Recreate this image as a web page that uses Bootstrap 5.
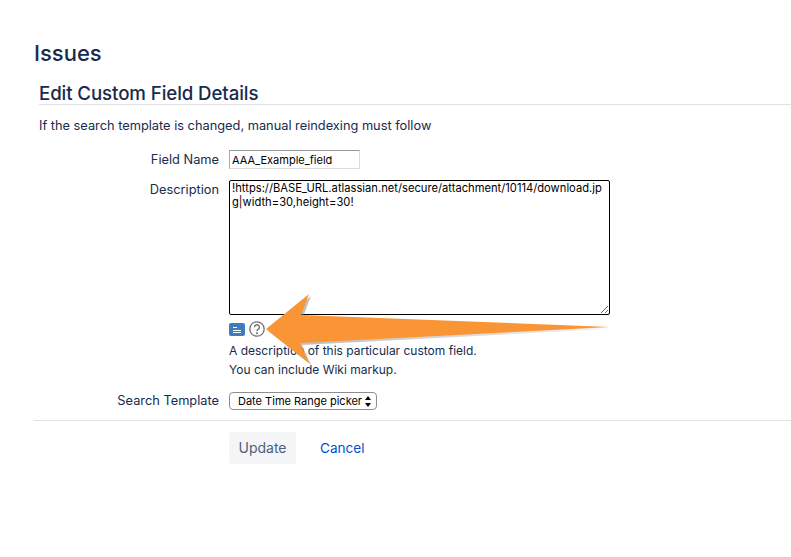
<!DOCTYPE html>
<html lang="en"><head><meta charset="utf-8"><title>Edit Custom Field Details</title>
<link href="https://cdn.jsdelivr.net/npm/bootstrap@5.3.0/dist/css/bootstrap.min.css" rel="stylesheet">
<style>
html,body{height:100%;overflow:hidden}
body{background:#fff;color:#172b4d;font-family:Inter,"Liberation Sans",sans-serif;font-size:12.8px;position:relative}
.page-wrap{padding:39px 0 0 34px}
.page-title{font-size:22px;font-weight:500;line-height:28px;margin:0 0 15px;color:#172b4d}
.sect-head{margin-left:5px;border-bottom:1px solid #dfe1e6;height:23px;padding-top:1px}
.sect-head h2{font-size:18.7px;font-weight:500;line-height:22px;margin:0;color:#172b4d;letter-spacing:-.1px}
.intro{margin:12px 0 0 5px;line-height:18px;height:18px}
.frow{display:flex}
.flabel{width:185px;text-align:right;flex:none;line-height:18px;padding-top:1px}
.fbody{margin-left:10px}
.name-in{width:131px;height:19px;border:1px solid #ddd;border-top-color:#999;border-left-color:#aaa;padding:0 2px;font:11px/17px Inter,"Liberation Sans",sans-serif;color:#000;display:block;border-radius:0;outline:0}
.desc-in{width:381px;height:135px;border:1px solid #000;border-radius:2px;padding:0 2px;font:11.2px/14px Inter,"Liberation Sans",sans-serif;color:#000;display:block;outline:0;word-break:break-all;resize:both}
.tools{height:14px;margin-top:7px;gap:4px}
.hint{line-height:18px;height:18px;white-space:nowrap;font-size:12px}
.tmpl{width:148px;height:18px;font:11px Inter,"Liberation Sans",sans-serif;color:#000;border:1px solid #8e8e8e;border-radius:4px;background:#fff;padding:0 0 0 8px;display:flex;align-items:center;justify-content:space-between;white-space:nowrap}
.divline{border-top:1px solid #dfe1e6;margin-top:10px}
.upd{background:#f4f5f7;color:#505f79;border:0;border-radius:3px;width:67px;height:32px;font-size:14px;padding:0;line-height:32px}
.canc{color:#0052cc;text-decoration:none;font-size:13.6px;margin-left:24px}
.arrow-over{position:absolute;left:0;top:0;pointer-events:none}
</style></head><body>
<div class="page-wrap">
<h1 class="page-title">Issues</h1>
<div class="sect-head"><h2>Edit Custom Field Details</h2></div>
<p class="intro">If the search template is changed, manual reindexing must follow</p>
<div class="frow" style="margin-top:15px"><div class="flabel">Field Name</div><div class="fbody"><input class="name-in" value="AAA_Example_field"></div></div>
<div class="frow" style="margin-top:11px"><div class="flabel">Description</div><div class="fbody">
<textarea class="desc-in">!https://BASE_URL.atlassian.net/secure/attachment/10114/download.jpg|width=30,height=30!</textarea>
<div class="d-flex align-items-center tools">
<svg width="16" height="13" viewBox="0 0 16 13"><rect width="16" height="13" rx="2" fill="#3f7cbc"/><path d="M4 4.500h4M4 7.500h8M4 9.500h8" stroke="#fff" stroke-width="1.100"/></svg>
<svg width="16" height="16" viewBox="0 0 16 16"><circle cx="8" cy="8" r="7.200" fill="#fff" stroke="#707070" stroke-width="1.300"/><path d="M5.600 6.200a2.400 2.400 0 1 1 3.700 2c-.9.500-1.300 1-1.300 2" fill="none" stroke="#707070" stroke-width="1.400"/><circle cx="8" cy="12.200" r="1" fill="#707070"/></svg>
</div>
<div class="hint" style="margin-top:6px">A description of this particular custom field.</div>
<div class="hint" style="margin-top:1px">You can include Wiki markup.</div>
</div></div>
<div class="frow" style="margin-top:13px"><div class="flabel pt-0">Search Template</div><div class="fbody"><div class="tmpl"><span>Date Time Range picker</span><svg width="8" height="11" viewBox="0 0 8 11" class="me-1"><path d="M4 0l3 4H1zM4 11l3-4H1z" fill="#000"/></svg></div></div></div>
<div class="divline"></div>
<div class="d-flex align-items-center" style="margin:11px 0 0 195px"><button class="btn upd" type="button">Update</button><a class="canc" href="#">Cancel</a></div>
</div>
<svg class="arrow-over" width="791" height="557" viewBox="0 0 791 557"><defs><linearGradient id="edge" x1="0" x2="1"><stop offset="0" stop-color="#808080" stop-opacity=".55"/><stop offset="1" stop-color="#808080" stop-opacity=".1"/></linearGradient></defs>
<path d="M268 331L311 296 303 317 610 329 302 345 311 365Z" fill="url(#edge)"/>
<path d="M266 329L309 294 301 315 610 327 300 343 309 363Z" fill="#f99535"/></svg>
</body></html>
